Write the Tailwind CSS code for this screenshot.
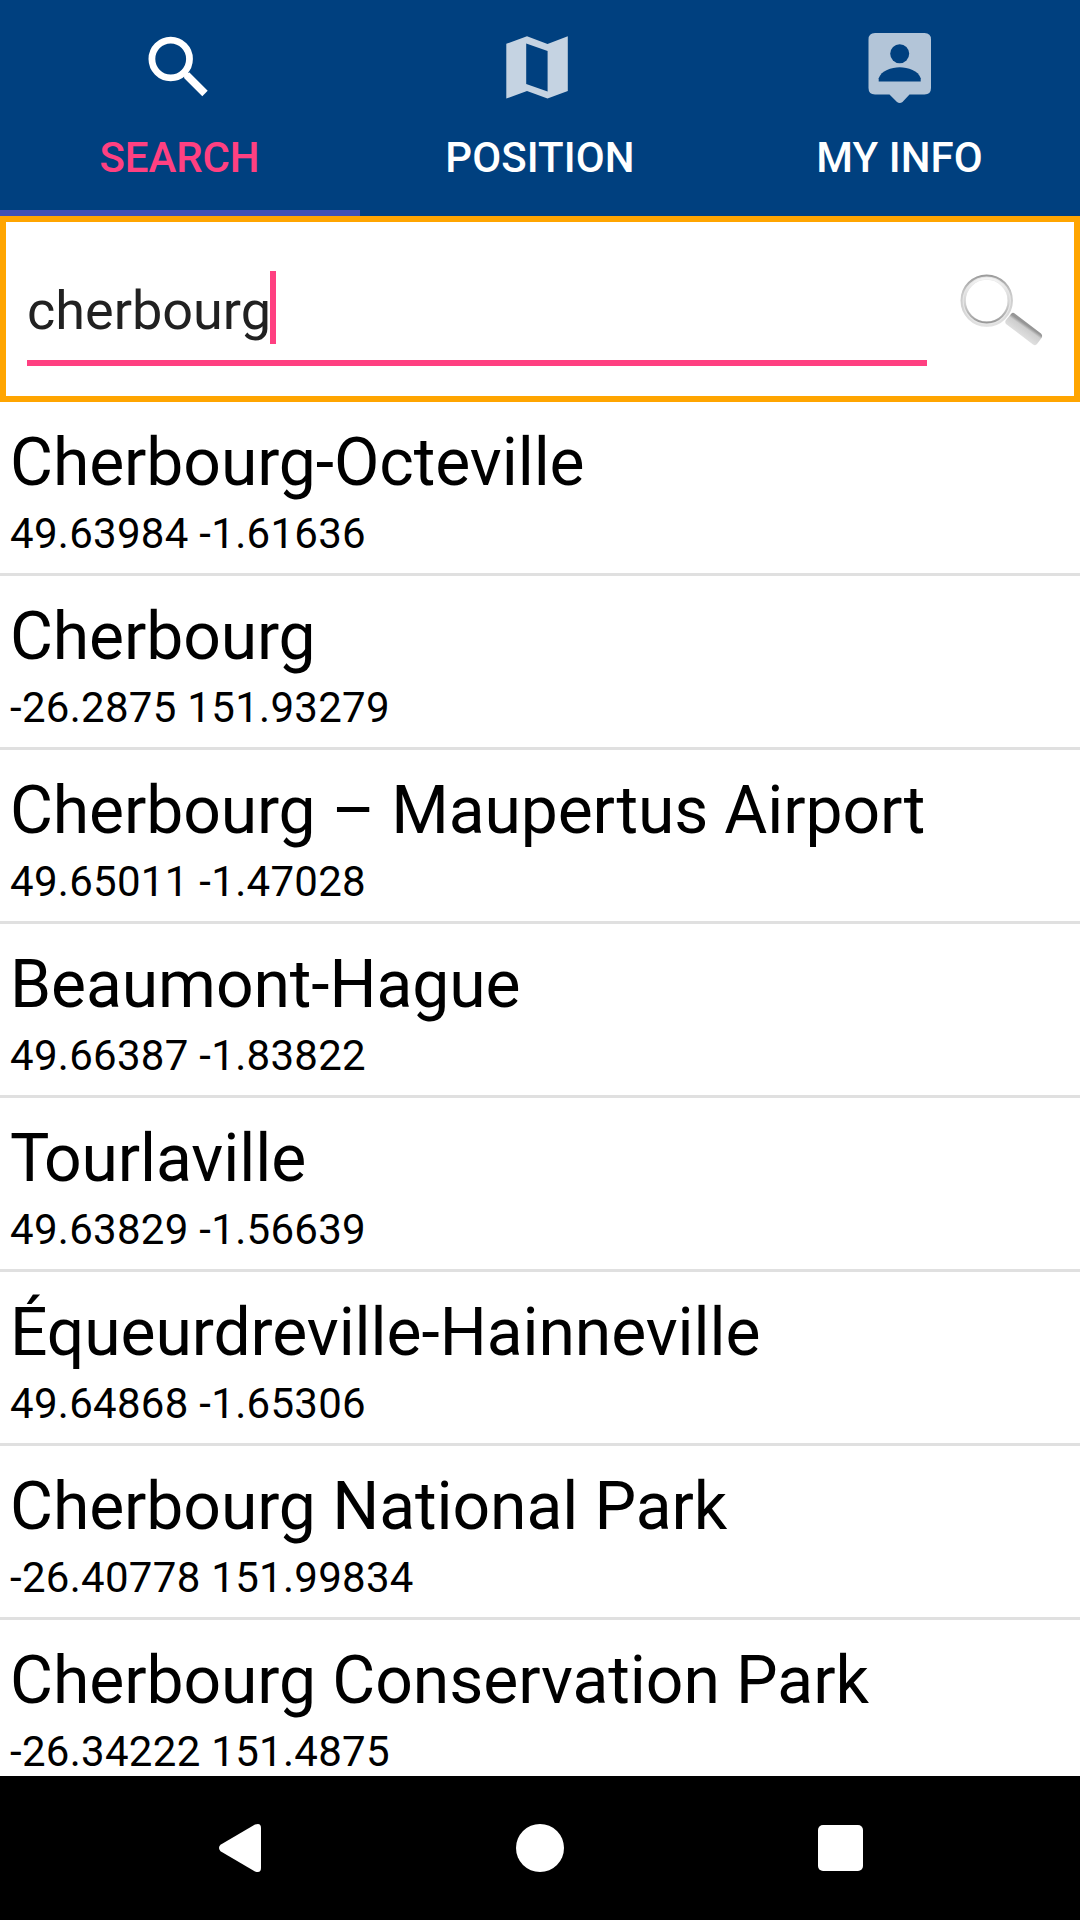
<!DOCTYPE html>
<html lang="en">
<head>
<meta charset="utf-8">
<title>Search</title>
<script src="https://cdn.jsdelivr.net/npm/@tailwindcss/browser@4"></script>
</head>
<body class="bg-white">
<div class="flex h-[1920px] w-[1080px] flex-col overflow-hidden bg-white font-['Roboto',sans-serif] text-black">
  <nav class="grid h-[216px] shrink-0 grid-cols-3 bg-[#00407f] text-[42px] leading-[50px] font-medium text-white">
    <div class="flex flex-col items-center border-b-[6px] border-[#3f51b5] pt-[18px] text-[#ff4081]">
      <svg class="h-24 w-24" viewBox="132 18 96 96" fill="none" stroke="#fff">
        <circle cx="170.7" cy="59" r="18.8" stroke-width="6.8"/>
        <path d="M183.5 72L187.5 76" stroke-width="6"/>
        <path d="M186.5 75L205 93.5" stroke-width="7.6"/>
      </svg>
      <span class="mt-[19px] mr-[1px] tracking-[-0.1px]">SEARCH</span>
    </div>
    <div class="flex flex-col items-center pt-[18px]">
      <svg class="h-24 w-24" viewBox="492 18 96 96" fill="#c5d3e2">
        <path fill-rule="evenodd" d="M506.3 43.8L527 36.3L547.5 44L567.8 36.3V91L547.5 98.6L527 91L506.3 98.6ZM526.2 43.6V84L547.6 91.6V51Z"/>
      </svg>
      <span class="mt-[19px] tracking-[0.1px]">POSITION</span>
    </div>
    <div class="flex flex-col items-center pt-[18px]">
      <svg class="h-24 w-24" viewBox="852 18 96 96">
        <path fill="#b3c5d8" d="M875 33H924.5Q931 33 931 39.5V88Q931 94.5 924.5 94.5H909.5L902.5 102Q899.7 104 897 102L889.5 94.5H875Q868.5 94.5 868.5 88V39.5Q868.5 33 875 33Z"/>
        <circle cx="899.7" cy="53.8" r="9.5" fill="#00407f"/>
        <path fill="#00407f" d="M878.7 81.6V78.3C881 70.5 891.5 67.2 899.7 67.2S918.5 70.5 920.7 78.3V81.6Z"/>
      </svg>
      <span class="mt-[19px] mr-[1px] tracking-[0.1px]">MY INFO</span>
    </div>
  </nav>

  <div class="flex h-[186px] shrink-0 border-[6px] border-[#ffa500] pt-[49px] pl-[21px]">
    <div class="flex h-[95px] w-[900px] border-b-[6px] border-[#ff4081] text-[54px] leading-[73px] text-[#212121]">
      <span class="w-[243px] pt-[3px]">cherbourg</span><span class="h-[73px] w-[6px] bg-[#ff4081]"></span>
    </div>
    <svg class="-mt-1 ml-[25px] h-24 w-24" viewBox="952 267 96 96">
      <defs>
        <linearGradient id="rim" x1="0" y1="0" x2="0" y2="1"><stop offset="0" stop-color="#9c9c9c"/><stop offset=".35" stop-color="#c8c8c8"/><stop offset="1" stop-color="#e2e2e2"/></linearGradient>
        <linearGradient id="inner" x1="0" y1="0" x2="0" y2="1"><stop offset="0" stop-color="#f4f4f4"/><stop offset=".55" stop-color="#d4d4d4"/><stop offset="1" stop-color="#989898"/></linearGradient>
        <linearGradient id="handle" gradientUnits="userSpaceOnUse" x1="1025" y1="324" x2="1018" y2="334"><stop offset="0" stop-color="#969696"/><stop offset=".25" stop-color="#cecece"/><stop offset="1" stop-color="#e0e0e0"/></linearGradient>
      </defs>
      <circle cx="986.7" cy="300.6" r="23.3" fill="none" stroke="#e6e6e6" stroke-width="5"/>
      <circle cx="986.7" cy="300.6" r="25.2" fill="none" stroke="url(#rim)" stroke-width="2"/>
      <circle cx="986.7" cy="300.6" r="22" fill="none" stroke="url(#inner)" stroke-width="2"/>
      <path fill="url(#handle)" d="M1014 313L1041 333.500Q1043 335.500 1041.500 338L1037 344Q1035.500 346 1033 344.500L1006 324Q1004.500 322 1006 320L1011 314Q1012.500 312 1014 313Z"/>
    </svg>
  </div>

  <main class="min-h-0 flex-1 overflow-hidden">
    <div class="h-[174px] border-b-[3px] border-[#e0e0e0] pt-[22px] pl-[10px]"><h2 class="text-[66px] leading-[77px] tracking-[-0.08px]">Cherbourg-Octeville</h2><p class="mt-2 text-[42px] leading-[49px] tracking-[0.29px]">49.63984 -1.61636</p></div>
    <div class="h-[174px] border-b-[3px] border-[#e0e0e0] pt-[22px] pl-[10px]"><h2 class="text-[66px] leading-[77px] tracking-[-0.12px]">Cherbourg</h2><p class="mt-2 text-[42px] leading-[49px] tracking-[0.29px]">-26.2875 151.93279</p></div>
    <div class="h-[174px] border-b-[3px] border-[#e0e0e0] pt-[22px] pl-[10px]"><h2 class="text-[66px] leading-[77px] tracking-[-0.12px]">Cherbourg – Maupertus Airport</h2><p class="mt-2 text-[42px] leading-[49px] tracking-[0.29px]">49.65011 -1.47028</p></div>
    <div class="h-[174px] border-b-[3px] border-[#e0e0e0] pt-[22px] pl-[10px]"><h2 class="text-[66px] leading-[77px] tracking-[-0.08px]">Beaumont-Hague</h2><p class="mt-2 text-[42px] leading-[49px] tracking-[0.29px]">49.66387 -1.83822</p></div>
    <div class="h-[174px] border-b-[3px] border-[#e0e0e0] pt-[22px] pl-[10px]"><h2 class="text-[66px] leading-[77px] tracking-[-0.08px]"><span class="tracking-[-5.5px]">T</span>ourlaville</h2><p class="mt-2 text-[42px] leading-[49px] tracking-[0.29px]">49.63829 -1.56639</p></div>
    <div class="h-[174px] border-b-[3px] border-[#e0e0e0] pt-[22px] pl-[10px]"><h2 class="text-[66px] leading-[77px] tracking-[-0.08px]">Équeurdreville-Hainneville</h2><p class="mt-2 text-[42px] leading-[49px] tracking-[0.29px]">49.64868 -1.65306</p></div>
    <div class="h-[174px] border-b-[3px] border-[#e0e0e0] pt-[22px] pl-[10px]"><h2 class="text-[66px] leading-[77px] tracking-[-0.08px]">Cherbourg National Park</h2><p class="mt-2 text-[42px] leading-[49px] tracking-[0.29px]">-26.40778 151.99834</p></div>
    <div class="h-[174px] pt-[22px] pl-[10px]"><h2 class="text-[66px] leading-[77px] tracking-[-0.06px]">Cherbourg Conservation Park</h2><p class="mt-2 text-[42px] leading-[49px] tracking-[0.29px]">-26.34222 151.4875</p></div>
  </main>

  <footer class="flex h-36 shrink-0 items-center justify-between bg-black pr-[217px] pl-[219px]">
    <svg class="h-12 w-[42px]" viewBox="0 0 42 48" fill="#fff"><path d="M1.500 20.800L36 .6Q42-1.500 42 4V44Q42 49.500 36 47.400L1.500 27.200Q-1.500 24 1.500 20.800Z"/></svg>
    <div class="ml-[1px] h-12 w-12 rounded-full bg-white"></div>
    <div class="h-[45.500px] w-[45.500px] rounded-[5px] bg-white"></div>
  </footer>
</div>
</body>
</html>
